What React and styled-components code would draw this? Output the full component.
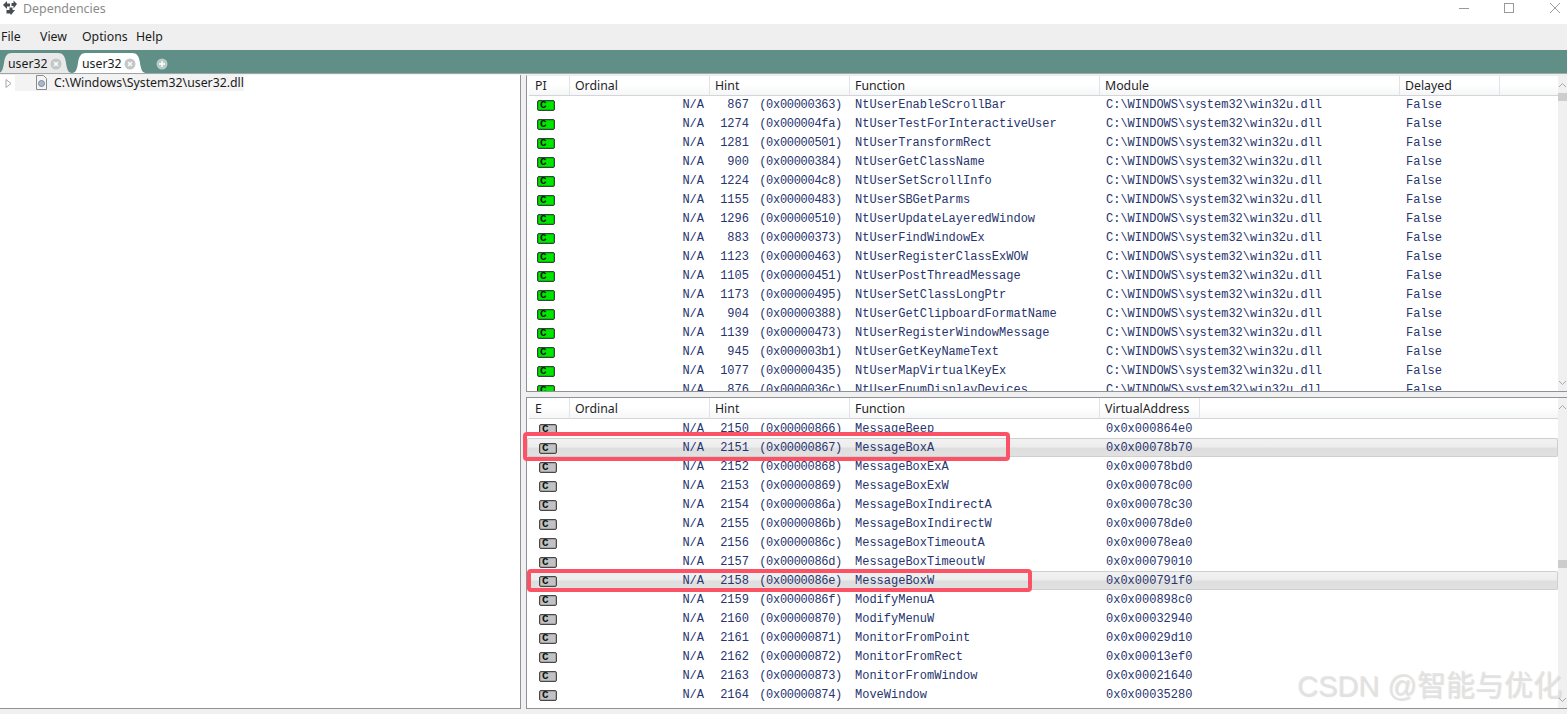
import React from "react";
import styled, { createGlobalStyle, css } from "styled-components";

const imports = [
  [867, "00000363", "NtUserEnableScrollBar"],
  [1274, "000004fa", "NtUserTestForInteractiveUser"],
  [1281, "00000501", "NtUserTransformRect"],
  [900, "00000384", "NtUserGetClassName"],
  [1224, "000004c8", "NtUserSetScrollInfo"],
  [1155, "00000483", "NtUserSBGetParms"],
  [1296, "00000510", "NtUserUpdateLayeredWindow"],
  [883, "00000373", "NtUserFindWindowEx"],
  [1123, "00000463", "NtUserRegisterClassExWOW"],
  [1105, "00000451", "NtUserPostThreadMessage"],
  [1173, "00000495", "NtUserSetClassLongPtr"],
  [904, "00000388", "NtUserGetClipboardFormatName"],
  [1139, "00000473", "NtUserRegisterWindowMessage"],
  [945, "000003b1", "NtUserGetKeyNameText"],
  [1077, "00000435", "NtUserMapVirtualKeyEx"],
  [876, "0000036c", "NtUserEnumDisplayDevices"],
];

// the last field is the red annotation drawn round a row
const exportsList = [
  [2150, "00000866", "MessageBeep", "000864e0"],
  [2151, "00000867", "MessageBoxA", "00078b70", { left: -4, top: -6, w: 487, h: 29 }],
  [2152, "00000868", "MessageBoxExA", "00078bd0"],
  [2153, "00000869", "MessageBoxExW", "00078c00"],
  [2154, "0000086a", "MessageBoxIndirectA", "00078c30"],
  [2155, "0000086b", "MessageBoxIndirectW", "00078de0"],
  [2156, "0000086c", "MessageBoxTimeoutA", "00078ea0"],
  [2157, "0000086d", "MessageBoxTimeoutW", "00079010"],
  [2158, "0000086e", "MessageBoxW", "000791f0", { left: 0, top: -2, w: 505, h: 23 }],
  [2159, "0000086f", "ModifyMenuA", "000898c0"],
  [2160, "00000870", "ModifyMenuW", "00032940"],
  [2161, "00000871", "MonitorFromPoint", "00029d10"],
  [2162, "00000872", "MonitorFromRect", "00013ef0"],
  [2163, "00000873", "MonitorFromWindow", "00021640"],
  [2164, "00000874", "MoveWindow", "00035280"],
];

const GlobalStyle = createGlobalStyle`
  html, body {
    margin: 0;
    padding: 0;
    background: #fff;
    overflow: hidden;
  }
`;

const Window = styled.div`
  position: relative;
  width: 1567px;
  height: 714px;
  display: flex;
  flex-direction: column;
  overflow: hidden;
  background: #f0f0f0;
  font-family: "Noto Sans", "Open Sans", sans-serif;
  font-size: 12.3px;
  color: #1a1a1a;
`;

const TitleBar = styled.div`
  height: 24px;
  flex: none;
  display: flex;
  align-items: flex-start;
  background: #fff;
  padding-left: 2px;
`;

const AppTitle = styled.span`
  margin-left: 5px;
  line-height: 17px;
  font-size: 12.4px;
  color: #8a8a8a;
`;

const WindowButtons = styled.div`
  margin-left: auto;
  display: flex;
`;

const WindowButton = styled.svg`
  width: 45px;
  height: 24px;
  display: block;
  stroke: #9a9a9a;
  fill: none;
`;

const MenuBar = styled.div`
  height: 26px;
  flex: none;
  display: flex;
  align-items: center;
  box-sizing: border-box;
  padding-bottom: 2px;
  background: #efefef;
`;

const MenuItem = styled.span`
  width: ${(p) => p.$w}px;
  padding-left: ${(p) => p.$pad || 0}px;
  box-sizing: border-box;
`;

const TabStrip = styled.div`
  height: 23px;
  flex: none;
  display: flex;
  align-items: flex-end;
  background: #5f8f87;
  overflow: hidden;
`;

const Tab = styled.div`
  width: 74px;
  height: 20px;
  flex: none;
  display: flex;
  align-items: center;
  gap: 2px;
  box-sizing: border-box;
  padding: 1px 0 0 10px;
  margin-left: ${(p) => (p.$active ? "0" : "-2px")};
  clip-path: path("M0 20C4 20 5 16 6 10C7 3 9 0 14 0H60C65 0 67 3 68 10C69 16 70 20 74 20Z");
  background: ${(p) => (p.$active ? "#fff" : "#e9e9e9")};
`;

const TabClose = styled.svg`
  width: 12px;
  height: 12px;
  flex: none;
`;

const NewTab = styled.svg`
  width: 12px;
  height: 12px;
  margin: 0 0 3px 10px;
`;

const Body = styled.div`
  flex: 1;
  min-height: 0;
  display: flex;
  border-top: 1px solid #a2a6a6;
  padding-top: 1px;
  padding-bottom: 5px;
  background: #f0f0f0;
`;

const TreePanel = styled.div`
  width: 521px;
  flex: none;
  box-sizing: border-box;
  background: #fff;
  border-right: 1px solid #8f9397;
  border-bottom: 1px solid #8f9397;
`;

const TreeRow = styled.div`
  height: 16px;
  display: flex;
  align-items: center;
  padding-left: 5px;
`;

const Expander = styled.svg`
  width: 7px;
  height: 9px;
  flex: none;
`;

const TreeLabel = styled.div`
  margin-left: 3px;
  width: 229px;
  height: 16px;
  box-sizing: border-box;
  display: flex;
  align-items: center;
  background: #f3f3f3;
  padding: 0 0 1px 20px;
  gap: 6px;
`;

const FileIcon = styled.svg`
  width: 13px;
  height: 15px;
  flex: none;
`;

const RightColumn = styled.div`
  flex: 1;
  min-width: 0;
  margin-left: 5px;
  display: flex;
  flex-direction: column;
  gap: 5px;
`;

const Panel = styled.div`
  height: ${(p) => p.$h}px;
  flex: none;
  display: flex;
  box-sizing: border-box;
  background: #fff;
  border-left: 1px solid #8f9397;
  border-bottom: 1px solid #8f9397;
  border-top: 1px solid ${(p) => p.$topLine};
  overflow: ${(p) => (p.$clip ? "hidden" : "visible")};
`;

const ListArea = styled.div`
  flex: 1;
  min-width: 0;
  position: relative;
`;

const HeaderRow = styled.div`
  display: grid;
  grid-template-columns: ${(p) => p.$columns};
  height: ${(p) => p.$h}px;
  margin-left: 2px;
  margin-bottom: ${(p) => p.$overlap || 0}px;
  box-sizing: border-box;
  background: linear-gradient(#fff 45%, #f5f6f7);
  border-bottom: 1px solid #d5d5d8;
`;

const HeaderCell = styled.div`
  padding-left: 5px;
  line-height: ${(p) => p.$line}px;
  border-right: 1px solid #e2e3e6;
  color: #1e1e28;

  &:first-child {
    padding-left: 6px;
  }
`;

const Row = styled.div`
  display: grid;
  grid-template-columns: ${(p) => p.$columns};
  position: relative;
  height: 19px;
  box-sizing: border-box;
  align-items: center;
  font-family: "Liberation Mono", "DejaVu Sans Mono", monospace;
  font-size: 12px;
  color: #27346e;
  white-space: pre;
  ${(p) =>
    p.$selected &&
    css`
      background: linear-gradient(#f2f2f2 0%, #ededed 45%, #dedede 55%, #e1e1e1);
      box-shadow: inset 0 0 0 1px #cfcfcf;
      border-radius: 2px;
    `}
`;

const Cell = styled.div`
  padding-left: ${(p) => p.$pad || 5}px;
`;

const NaCell = styled(Cell)`
  padding-right: 6px;
  text-align: right;
`;

const HintCell = styled(Cell)`
  padding-right: 8px;
  text-align: right;
`;

const HexPart = styled.span`
  margin-left: 3px;
  letter-spacing: -0.3px;
`;

const IconCell = styled.div`
  padding: ${(p) => p.$dy}px 0 0 ${(p) => p.$pad}px;
  display: flex;
  align-items: center;
`;

const SymbolIcon = styled.div`
  width: 18px;
  height: 11px;
  box-sizing: border-box;
  display: flex;
  align-items: center;
  padding-left: 2px;
  overflow: hidden;
  border: 1px solid ${(p) => (p.$kind === "green" ? "#34453a" : "#484848")};
  border-radius: 2px;
  box-shadow: inset 0 0 0 0.5px rgba(0, 0, 0, 0.3);
  background: ${(p) => (p.$kind === "green" ? "#00e800" : "#c2c2c2")};
  font-family: "Liberation Mono", monospace;
  font-size: 11px;
  line-height: 9px;
  font-weight: 700;
  color: #0c120c;
`;

const HighlightBox = styled.div`
  position: absolute;
  z-index: 2;
  left: ${(p) => p.$box.left}px;
  top: ${(p) => p.$box.top}px;
  width: ${(p) => p.$box.w}px;
  height: ${(p) => p.$box.h}px;
  box-sizing: border-box;
  border: 4px solid #fb5266;
  border-radius: 4px;
  pointer-events: none;
`;

const ScrollBar = styled.div`
  width: 9px;
  flex: none;
  position: relative;
  background: #f0f0f0;
`;

const ScrollThumb = styled.div`
  position: absolute;
  left: 0;
  right: 0;
  top: ${(p) => p.$top}px;
  height: 8px;
  background: #cdcdcd;
`;

const ScrollArrow = styled.svg`
  display: block;
  width: 9px;
  height: 9px;
  position: absolute;
  left: 0;
  ${(p) => (p.$down ? "bottom: 4px;" : "top: 5px;")}
`;

const Watermark = styled.div`
  position: absolute;
  z-index: 3;
  left: 1297px;
  top: 668px;
  font-family: "Liberation Sans", "Noto Sans CJK SC", sans-serif;
  font-size: 29px;
  line-height: 36px;
  white-space: nowrap;
  color: rgba(226, 226, 226, 0.8);
  text-shadow: 1px 1px 1px rgba(150, 150, 150, 0.3);
`;

const topColumns = "43px 140px 140px 250px 300px 100px 1fr";
const topHeaderColumns = "41px 140px 140px 250px 300px 100px 1fr";
const bottomColumns = "43px 140px 140px 250px 100px 1fr";
const bottomHeaderColumns = "41px 140px 140px 250px 100px 1fr";

function TabItem({ active }) {
  return (
    <Tab $active={active}>
      user32
      <TabClose viewBox="0 0 12 12">
        <circle cx="6" cy="6" r="5.5" fill="#c3c7c8" />
        <path d="M4 4l4 4M8 4l-4 4" stroke="#fff" strokeWidth="1.4" />
      </TabClose>
    </Tab>
  );
}

function Scroller({ thumb }) {
  return (
    <ScrollBar>
      <ScrollArrow viewBox="0 0 9 9">
        <path d="M1 6l3.5-3.5L8 6" fill="none" stroke="#a8a8a8" />
      </ScrollArrow>
      <ScrollThumb $top={thumb} />
      <ScrollArrow $down viewBox="0 0 9 9">
        <path d="M1 3l3.5 3.5L8 3" fill="none" stroke="#a8a8a8" />
      </ScrollArrow>
    </ScrollBar>
  );
}

function Hint({ hint, hex }) {
  return (
    <HintCell>
      {String(hint).padStart(4, " ")} <HexPart>(0x{hex})</HexPart>
    </HintCell>
  );
}

export default function App() {
  return (
    <Window>
      <GlobalStyle />
      <TitleBar>
        <svg width="16" height="16" viewBox="0 0 16 16">
          <path d="M1 5l4-4v2.5h3v3H5V9z" fill="#464c50" />
          <path d="M15 4l-3.500-3.500V3H9.500v3H11.500v2.500z" fill="#464c50" />
          <path d="M4.500 10h3V7.500h3V10H13l-4 5-1-1.500H4.500z" fill="#464c50" />
        </svg>
        <AppTitle>Dependencies</AppTitle>
        <WindowButtons>
          <WindowButton viewBox="0 0 45 24">
            <path d="M27 8.500h10" />
          </WindowButton>
          <WindowButton viewBox="0 0 45 24">
            <rect x="27.500" y="3.500" width="9" height="9" />
          </WindowButton>
          <WindowButton viewBox="0 0 45 24">
            <path d="M28 3l10 10M38 3L28 13" />
          </WindowButton>
        </WindowButtons>
      </TitleBar>

      <MenuBar>
        <MenuItem $w={40} $pad={1}>File</MenuItem>
        <MenuItem $w={42}>View</MenuItem>
        <MenuItem $w={54}>Options</MenuItem>
        <MenuItem $w={40}>Help</MenuItem>
      </MenuBar>

      <TabStrip>
        <TabItem />
        <TabItem active />
        <NewTab viewBox="0 0 12 12">
          <circle cx="6" cy="6" r="5.500" fill="#b9cbc7" />
          <path d="M6 3v6M3 6h6" stroke="#fff" strokeWidth="1.400" />
        </NewTab>
      </TabStrip>

      <Body>
        <TreePanel>
          <TreeRow>
            <Expander viewBox="0 0 7 9">
              <path d="M1 .5l5 4-5 4z" fill="#fff" stroke="#a6a6a6" />
            </Expander>
            <TreeLabel>
              <FileIcon viewBox="0 0 13 15">
                <path d="M1.500.5h7l3 3v11h-10z" fill="#f4f4f4" stroke="#8b8b8b" />
                <circle cx="6.500" cy="8.500" r="3" fill="#a9b9cc" stroke="#7d8a99" />
              </FileIcon>
              C:\Windows\System32\user32.dll
            </TreeLabel>
          </TreeRow>
        </TreePanel>

        <RightColumn>
          <Panel $h={317} $clip $topLine="#ececec">
            <ListArea>
              <HeaderRow $columns={topHeaderColumns} $h={20} $overlap={-1}>
                <HeaderCell $line={19}>PI</HeaderCell>
                <HeaderCell $line={19}>Ordinal</HeaderCell>
                <HeaderCell $line={19}>Hint</HeaderCell>
                <HeaderCell $line={19}>Function</HeaderCell>
                <HeaderCell $line={19}>Module</HeaderCell>
                <HeaderCell $line={19}>Delayed</HeaderCell>
              </HeaderRow>
              {imports.map(([hint, hex, name]) => (
                <Row key={name} $columns={topColumns}>
                  <IconCell $pad={10} $dy={2}>
                    <SymbolIcon $kind="green">C</SymbolIcon>
                  </IconCell>
                  <NaCell>N/A</NaCell>
                  <Hint hint={hint} hex={hex} />
                  <Cell>{name}</Cell>
                  <Cell $pad={6}>C:\WINDOWS\system32\win32u.dll</Cell>
                  <Cell $pad={6}>False</Cell>
                </Row>
              ))}
            </ListArea>
            <Scroller thumb={17} />
          </Panel>

          <Panel $h={312} $topLine="#8f9397">
            <ListArea>
              <HeaderRow $columns={bottomHeaderColumns} $h={21}>
                <HeaderCell $line={21}>E</HeaderCell>
                <HeaderCell $line={21}>Ordinal</HeaderCell>
                <HeaderCell $line={21}>Hint</HeaderCell>
                <HeaderCell $line={21}>Function</HeaderCell>
                <HeaderCell $line={21}>VirtualAddress</HeaderCell>
              </HeaderRow>
              {exportsList.map(([hint, hex, name, addr, box]) => (
                <Row key={name} $columns={bottomColumns} $selected={!!box}>
                  <IconCell $pad={12} $dy={1}>
                    <SymbolIcon>C</SymbolIcon>
                  </IconCell>
                  <NaCell>N/A</NaCell>
                  <Hint hint={hint} hex={hex} />
                  <Cell>{name}</Cell>
                  <Cell $pad={6}>0x0x{addr}</Cell>
                  {box && <HighlightBox $box={box} />}
                </Row>
              ))}
            </ListArea>
            <Scroller thumb={162} />
          </Panel>
        </RightColumn>
      </Body>

      <Watermark>CSDN @智能与优化</Watermark>
    </Window>
  );
}
